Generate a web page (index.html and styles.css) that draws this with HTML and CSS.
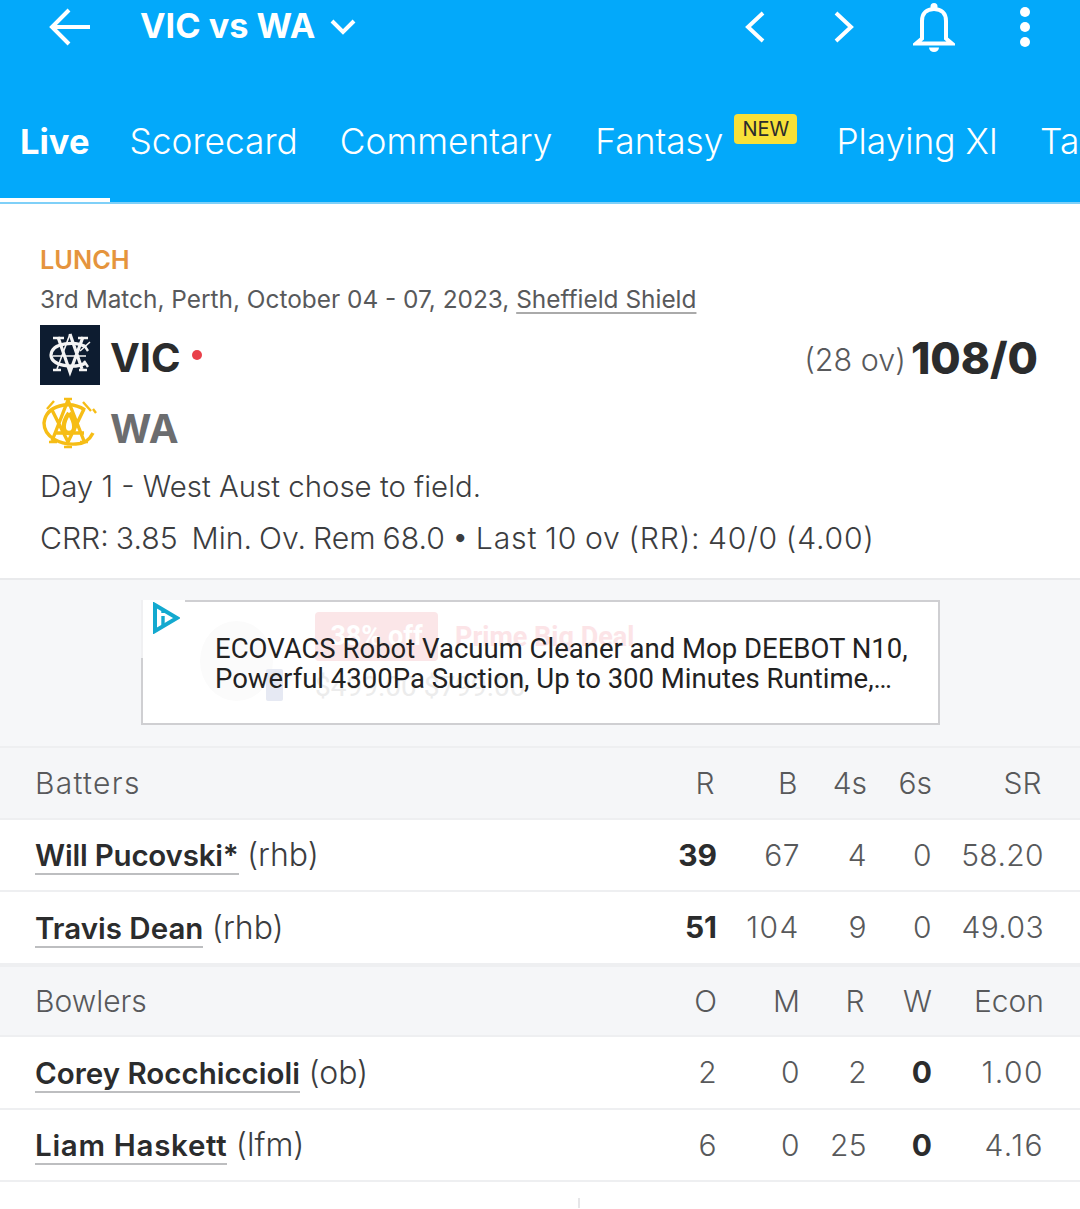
FILE: index.html
```html
<!DOCTYPE html>
<html lang="en">
<head>
<meta charset="utf-8">
<title>VIC vs WA</title>
<link rel="stylesheet" href="styles.css">
</head>
<body>
<header class="appbar">
  <div class="toolbar">
    <svg class="ico back" viewBox="0 0 42 42"><path d="M41 21H5M20 4 3 21l17 17"/></svg>
    <div class="title">VIC vs WA</div>
    <svg class="ico caret" viewBox="0 0 26 18"><path d="M2 3l11 11L24 3"/></svg>
    <div class="spacer"></div>
    <svg class="ico prev" viewBox="0 0 22 34"><path d="M19 3 4 17l15 14"/></svg>
    <svg class="ico next" viewBox="0 0 22 34"><path d="M3 3l15 14L3 31"/></svg>
    <svg class="ico bell" viewBox="0 0 42 52"><path d="M3 42.500h36l-6-5V20C33 12 28 8 21 8S9 12 9 20v17.500z"/><circle class="fill" cx="21" cy="5.500" r="3.500"/><path class="fill" d="M16 46.500h10a5 4.500 0 0 1-10 0z"/></svg>
    <div class="dots"><i></i><i></i><i></i></div>
  </div>
  <nav class="tabs">
    <a class="tab active">Live</a>
    <a class="tab">Scorecard</a>
    <a class="tab comm">Commentary</a>
    <a class="tab fantasy">Fantasy<span class="new">NEW</span></a>
    <a class="tab">Playing XI</a>
    <a class="tab">Table</a>
  </nav>
</header>

<section class="match">
  <div class="status">LUNCH</div>
  <div class="meta">3rd Match, Perth, October 04 - 07, 2023, <u>Sheffield Shield</u></div>
  <div class="team">
    <div class="logo vic">
      <svg viewBox="0 0 60 60"><g class="mono"><path d="M46 22C36 16 12 17 11 30c0 11 23 14 35 8"/><path class="thin" d="M30 9 17 44M50 17 40 26M13 31h33"/><path d="M30 9l12 35M18 12l12 35 13-35"/><path class="serif" d="M13 13h11M38 13h10M13 45h8M39 45h8M44 20l4 6M44 36l4 6"/></g></svg>
    </div>
    <span class="abbr">VIC</span><i class="live-dot"></i>
    <div class="spacer"></div>
    <span class="overs">(28 ov)</span><span class="score">108/0</span>
  </div>
  <div class="team second">
    <div class="logo wa">
      <svg viewBox="0 0 60 60"><g class="mono gold"><path d="M45 15C30 5 6 10 4 28c0 14 16 22 32 21 8 0 14-5 17-11"/><path d="M28 5 12 46M28 5l16 41M12 15l16 32 16-33M14 38h30"/><path class="flame" d="M29 18c-7 10-7 20 0 20s7-10 0-20"/><path class="serif" d="M7 14l7-8M43 7l8 9M24 4h8M9 47h8M40 47h8M24 52h8M53 14l3 4"/></g></svg>
    </div>
    <span class="abbr muted">WA</span>
  </div>
  <div class="line">Day 1 - West Aust chose to field.</div>
  <div class="line crr">CRR: 3.85 &nbsp;Min. Ov. Rem 68.0 • <span class="tail">Last 10 ov (RR): 40/0 (4.00)</span></div>
</section>

<section class="adwrap">
  <div class="ad">
    <div class="ghost">
      <div class="ghost-disc"></div>
      <div class="ghost-block"></div>
      <div class="ghost-col">
        <div class="ghost-top"><span class="ghost-off">38% off</span><span class="ghost-deal">Prime Big Deal</span></div>
        <div class="ghost-price">$499.00 $799.00</div>
      </div>
    </div>
    <p class="adtext">ECOVACS Robot Vacuum Cleaner and Mop DEEBOT N10,<br>Powerful 4300Pa Suction, Up to 300 Minutes Runtime,…</p>
    <div class="adchoice">
      <svg viewBox="0 0 28 32"><path d="M3 3l22 13L3 29z"/><path class="i" d="M11 14v9M11 9v2"/></svg>
    </div>
  </div>
</section>

<section class="stats">
  <div class="row head first"><div class="name batters">Batters</div><div class="sh">R</div><div class="sh">B</div><div>4s</div><div>6s</div><div class="sh">SR</div></div>
  <div class="row"><div class="name"><a class="tight">Will Pucovski*</a> <span class="hand">(rhb)</span></div><div class="b">39</div><div class="n">67</div><div class="n">4</div><div class="n">0</div><div class="n">58.20</div></div>
  <div class="row"><div class="name"><a>Travis Dean</a> <span class="hand">(rhb)</span></div><div class="b">51</div><div class="n wide">104</div><div class="n">9</div><div class="n">0</div><div class="n">49.03</div></div>
  <div class="row head"><div class="name">Bowlers</div><div>O</div><div>M</div><div class="sh">R</div><div>W</div><div>Econ</div></div>
  <div class="row"><div class="name"><a>Corey Rocchiccioli</a> <span class="hand">(ob)</span></div><div class="n">2</div><div class="n">0</div><div class="n">2</div><div class="b">0</div><div class="n wide">1.00</div></div>
  <div class="row"><div class="name"><a class="loose">Liam Haskett</a> <span class="hand">(lfm)</span></div><div class="n">6</div><div class="n">0</div><div class="n">25</div><div class="b">0</div><div class="n wide">4.16</div></div>
</section>
<div class="tick"></div>
</body>
</html>
```
FILE: styles.css
```css
* { box-sizing: border-box; }
html, body { margin: 0; padding: 0; }
body { width: 1080px; height: 1209px; overflow: hidden; background: #fff; font-family: Inter, "Noto Sans", sans-serif; color: #2b2c2d; }
.spacer { flex: 1; }

.appbar { height: 204px; background: #03a9fa; border-bottom: 2px solid #7fd0f8; color: #fff; overflow: hidden; }
.toolbar { height: 54px; display: flex; align-items: center; }
.ico { fill: none; stroke: #fff; stroke-width: 4; display: block; flex: none; }
.ico .fill { fill: #fff; stroke: none; }
.back { width: 42px; height: 42px; margin-left: 49px; }
.title { margin-left: 49px; font-size: 34.300px; font-weight: 700; line-height: 50px; white-space: nowrap; margin-top: -2px; }
.caret { width: 26px; height: 18px; margin-left: 15px; }
.prev { width: 22px; height: 34px; }
.next { width: 22px; height: 34px; margin-left: 67px; }
.bell { width: 42px; height: 52px; margin-left: 58px; }
.dots { margin-right: 50px; margin-left: 65px; display: flex; flex-direction: column; gap: 5px; }
.dots i { width: 10px; height: 10px; border-radius: 50%; background: #fff; display: block; }

.tabs { display: flex; height: 148px; white-space: nowrap; padding-left: 20px; }
.tab { position: relative; font-size: 35.300px; font-weight: 300; line-height: 175px; height: 148px; margin-right: 42px; }
.tab.active { font-size: 34.500px; font-weight: 700; margin-right: 40px; }
.tab.comm { margin-right: 43px; }
.tab.active::after { content: ""; position: absolute; left: -20px; right: -21px; bottom: 0; height: 4px; background: #fff; }
.new { position: absolute; left: 139px; top: 60px; width: 63px; height: 30px; background: #f8e038; color: #2b2c2d; border-radius: 4px; font-size: 20px; font-weight: 400; line-height: 30px; text-align: center; }
.tab.fantasy { margin-right: 113px; }

.match { height: 376px; padding: 40px 40px 0; border-bottom: 2px solid #e9eaec; }
.status { font-size: 25.300px; font-weight: 600; color: #e5943d; line-height: 32px; }
.meta { font-size: 24.400px; font-weight: 400; color: #58595b; line-height: 33px; margin-top: 7px; }
.meta u { text-decoration-color: #aaa; text-underline-offset: 4px; }
.team { display: flex; align-items: center; height: 60px; margin-top: 9px; }
.team.second { margin-top: 10px; height: 60px; }
.logo { width: 60px; height: 60px; flex: none; }
.logo svg { width: 60px; height: 60px; display: block; }
.vic { background: #0d1c30; }
.mono { fill: none; stroke: #f4f4f4; stroke-width: 3.200; }
.mono .thin { stroke-width: 1.600; }
.mono .serif { stroke-width: 2.400; }
.mono.gold { stroke: #f6bd16; stroke-width: 3.400; }
.mono .flame { stroke-width: 4.400; }
.abbr { margin-left: 10px; font-size: 40px; font-weight: 700; line-height: 60px; color: #2b2c2d; padding-top: 6px; }
.abbr.muted { color: #6c6d6f; padding-top: 8px; }
.live-dot { width: 10px; height: 10px; border-radius: 50%; background: #e9404a; margin: 0 0 0 11px; }
.overs { font-size: 30.500px; font-weight: 300; color: #58595b; margin-right: 5px; padding-top: 8px; }
.score { font-size: 44px; font-weight: 800; margin-right: 2px; padding-top: 6px; }
.line { font-size: 29.400px; font-weight: 300; line-height: 40px; color: #3c3d3f; margin-top: 12px; }
.line.crr { font-size: 30.200px; margin-top: 11px; word-spacing: -1.500px; }
.tail { letter-spacing: .8px; }

.adwrap { height: 166px; background: #f6f7f9; padding-top: 20px; }
.ad { position: relative; width: 799px; height: 125px; margin-left: 141px; background: #fff; border: 2px solid #cfcfd2; }
.adtext { position: absolute; left: 72px; top: 32px; margin: 0; font-family: Roboto, sans-serif; font-size: 27.500px; line-height: 30px; color: #222; white-space: nowrap; }
.adchoice { position: absolute; left: -2px; top: -2px; width: 44px; height: 58px; background: #fff; border-left: 2px solid #f0f0f2; }
.adchoice svg { position: absolute; left: 9px; top: 2px; width: 28px; height: 32px; fill: none; stroke: #13a9cf; stroke-width: 4; }
.adchoice .i { stroke-width: 3.400; }
.ghost { position: absolute; left: 57px; top: 10px; display: flex; gap: 42px; }
.ghost-disc { width: 73px; height: 80px; border-radius: 50%; background: #fbfbfb; margin-top: 9px; }
.ghost-block { position: absolute; left: 66px; top: 57px; width: 17px; height: 32px; background: #e6e9f3; border-radius: 2px; }
.ghost-col { display: flex; flex-direction: column; }
.ghost-top { display: flex; align-items: center; gap: 17px; }
.ghost-off { width: 123px; height: 49px; line-height: 49px; text-align: center; background: #fbe6e8; color: #fff; font-family: Roboto, sans-serif; font-weight: 700; font-size: 27px; border-radius: 4px; }
.ghost-deal { color: #fce4e7; font-family: Roboto, sans-serif; font-weight: 700; font-size: 27px; }
.ghost-price { font-family: Roboto, sans-serif; font-size: 28px; line-height: 34px; margin-top: 9px; color: #ececec; }

.row { display: grid; grid-template-columns: 1fr 83px 83px 67px 65px 112px; height: 72.500px; padding: 0 36px; align-items: center; border-bottom: 2.500px solid #eeeff1; font-size: 30px; font-weight: 300; color: #58595b; text-align: right; }
.row .name { text-align: left; color: #3c3d3f; margin-left: -1px; }
.row .n { letter-spacing: .4px; }
.row .n.wide { letter-spacing: 1.500px; }
.row .sh { padding-right: 2.500px; }
.row .hand { font-size: 32px; }
.row a { font-size: 29.500px; font-weight: 600; color: #2b2c2d; border-bottom: 2px solid #bdbec0; }
.row a.tight { letter-spacing: -.2px; }
.row a.loose { letter-spacing: .7px; }
.row .b { font-weight: 700; color: #2b2c2d; }
.row.head { background: #f5f6f8; border-top: 2px solid #eeeff1; }
.row.head.first { height: 73.500px; }
.row.head .name { color: #58595b; }
.row.head .batters { letter-spacing: 1.300px; }
.tick { width: 2px; height: 10px; margin: 16px 0 0 578px; background: #e6e6e8; }
```
